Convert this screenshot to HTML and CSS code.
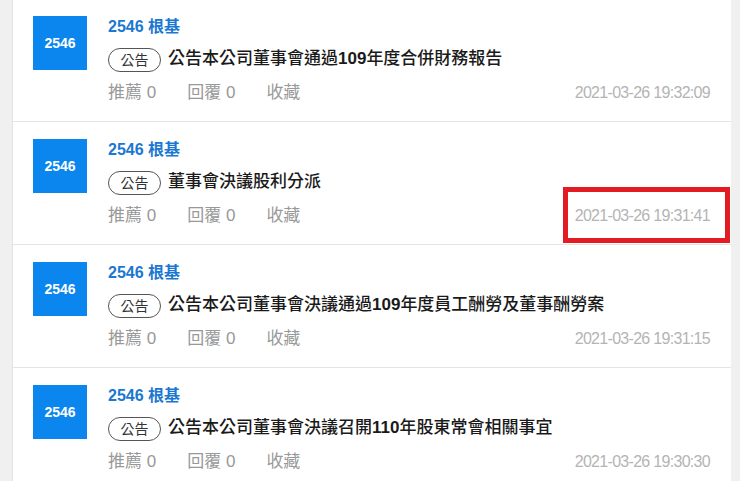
FILE: index.html
```html
<!DOCTYPE html>
<html lang="zh-Hant">
<head>
<meta charset="utf-8">
<title>根基 公告</title>
<link rel="stylesheet" href="styles.css">
</head>
<body>
<div class="feed">
  <div class="item">
    <div class="badge">2546</div>
    <div class="body">
      <div class="stock">2546 根基</div>
      <div class="headline"><span class="tag">公告</span><span class="text">公告本公司董事會通過<b>109</b>年度合併財務報告</span></div>
      <div class="meta">
        <div class="stats"><span class="stat">推薦 0</span><span class="stat">回覆 0</span><span class="stat">收藏</span></div>
        <span class="time">2021-03-26 19:32:09</span>
      </div>
    </div>
  </div>
  <div class="item">
    <div class="badge">2546</div>
    <div class="body">
      <div class="stock">2546 根基</div>
      <div class="headline"><span class="tag">公告</span><span class="text">董事會決議股利分派</span></div>
      <div class="meta">
        <div class="stats"><span class="stat">推薦 0</span><span class="stat">回覆 0</span><span class="stat">收藏</span></div>
        <span class="time">2021-03-26 19:31:41</span>
      </div>
    </div>
    <div class="highlight"></div>
  </div>
  <div class="item">
    <div class="badge">2546</div>
    <div class="body">
      <div class="stock">2546 根基</div>
      <div class="headline"><span class="tag">公告</span><span class="text">公告本公司董事會決議通過<b>109</b>年度員工酬勞及董事酬勞案</span></div>
      <div class="meta">
        <div class="stats"><span class="stat">推薦 0</span><span class="stat">回覆 0</span><span class="stat">收藏</span></div>
        <span class="time">2021-03-26 19:31:15</span>
      </div>
    </div>
  </div>
  <div class="item">
    <div class="badge">2546</div>
    <div class="body">
      <div class="stock">2546 根基</div>
      <div class="headline"><span class="tag">公告</span><span class="text">公告本公司董事會決議召開<b>110</b>年股東常會相關事宜</span></div>
      <div class="meta">
        <div class="stats"><span class="stat">推薦 0</span><span class="stat">回覆 0</span><span class="stat">收藏</span></div>
        <span class="time">2021-03-26 19:30:30</span>
      </div>
    </div>
  </div>
</div>
</body>
</html>
```

FILE: styles.css
```css
html, body {
  margin: 0;
  padding: 0;
}
body {
  background: #f0f0f0;
  font-family: "Liberation Sans", "Noto Sans CJK TC", sans-serif;
  height: 481px;
  overflow: hidden;
  padding-left: 12px;
}
.feed {
  width: 718px;
  background: #ffffff;
  border-left: 1px solid #e2e2e2;
  margin-top: -1px;
}
.item {
  position: relative;
  display: flex;
  gap: 21px;
  padding: 17px 21px 17px 20px;
  border-bottom: 1px solid #e4e4e4;
}
.badge {
  flex: none;
  width: 54px;
  height: 54px;
  background: #0a86ee;
  color: #ffffff;
  font-weight: bold;
  font-size: 14px;
  display: flex;
  align-items: center;
  justify-content: center;
}
.body {
  flex: 1;
  display: flex;
  flex-direction: column;
  gap: 10px;
}
.stock {
  font-size: 16px;
  line-height: 22px;
  font-weight: bold;
  color: #1a78d2;
}
.headline {
  display: flex;
  align-items: center;
  gap: 7px;
  height: 24px;
}
.tag {
  box-sizing: border-box;
  height: 24px;
  width: 53px;
  border: 1px solid #555555;
  border-radius: 12px;
  font-size: 14px;
  line-height: 22px;
  text-align: center;
  color: #333333;
}
.text {
  font-size: 17px;
  line-height: 20px;
  margin-bottom: 2px;
  font-weight: 500;
  color: #1a1a1a;
}
.text b {
  font-weight: bold;
}
.meta {
  display: flex;
  justify-content: space-between;
  align-items: center;
  height: 22px;
}
.stats {
  display: flex;
  gap: 31px;
  font-size: 17px;
  line-height: 22px;
  color: #999999;
}
.time {
  font-size: 16px;
  letter-spacing: -0.7px;
  line-height: 22px;
  color: #b4b4b4;
}
.highlight {
  position: absolute;
  left: 550px;
  top: 65px;
  width: 157px;
  height: 46px;
  border: 5px solid #e31b23;
}
```
